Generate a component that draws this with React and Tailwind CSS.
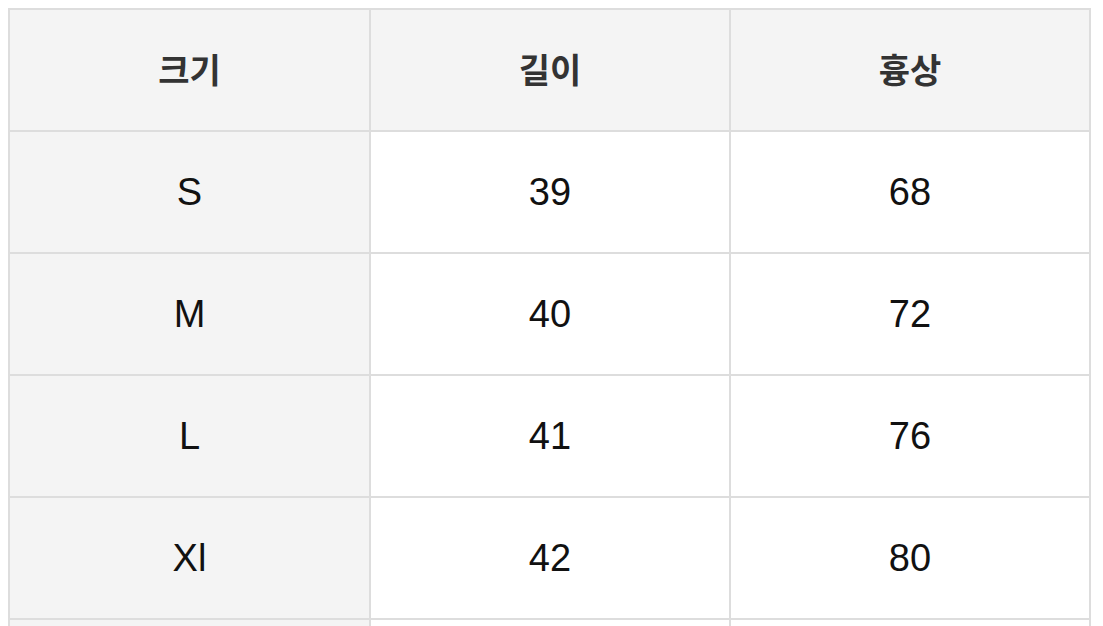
export default function App() {
  const header = ["크기", "길이", "흉상"];
  const rows = [
    ["S", "39", "68"],
    ["M", "40", "72"],
    ["L", "41", "76"],
    ["Xl", "42", "80"],
    ["", "", ""],
  ];
  const font = { fontFamily: '"Liberation Sans", "Noto Sans CJK KR", sans-serif' };
  return (
    <div className="h-[626px] w-[1103px] overflow-hidden bg-white pl-[8px] pt-[8px]" style={font}>
      <div className="grid w-[1083px] grid-cols-[359px_358px_358px] gap-[2px] bg-[#dddddd] p-[2px]">
        {header.map((h) => (
          <div key={h} className="flex h-[120px] items-center justify-center bg-[#f4f4f4] pt-[2px] text-[34px] font-semibold text-[#333333]">
            {h}
          </div>
        ))}
        {rows.map((r, i) =>
          r.map((c, j) => (
            <div
              key={i + "-" + j}
              className={
                "flex h-[120px] items-center justify-center text-[38px] text-[#111111] " +
                (j === 0 ? "bg-[#f4f4f4]" : "bg-white")
              }
            >
              {c}
            </div>
          ))
        )}
      </div>
    </div>
  );
}
